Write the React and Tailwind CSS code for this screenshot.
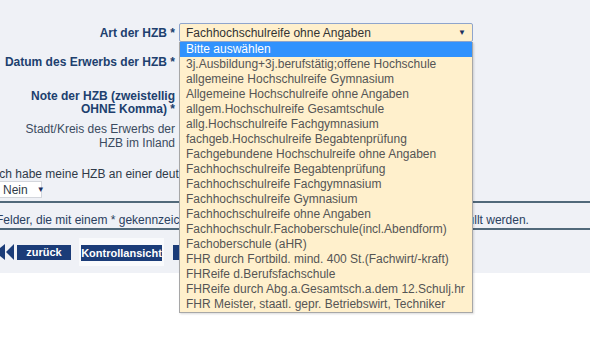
const options = [
  'Bitte auswählen',
  '3j.Ausbildung+3j.berufstätig;offene Hochschule',
  'allgemeine Hochschulreife Gymnasium',
  'Allgemeine Hochschulreife ohne Angaben',
  'allgem.Hochschulreife Gesamtschule',
  'allg.Hochschulreife Fachgymnasium',
  'fachgeb.Hochschulreife Begabtenprüfung',
  'Fachgebundene Hochschulreife ohne Angaben',
  'Fachhochschulreife Begabtenprüfung',
  'Fachhochschulreife Fachgymnasium',
  'Fachhochschulreife Gymnasium',
  'Fachhochschulreife ohne Angaben',
  'Fachhochschulr.Fachoberschule(incl.Abendform)',
  'Fachoberschule (aHR)',
  'FHR durch Fortbild. mind. 400 St.(Fachwirt/-kraft)',
  'FHReife d.Berufsfachschule',
  'FHReife durch Abg.a.Gesamtsch.a.dem 12.Schulj.hr',
  'FHR Meister, staatl. gepr. Betriebswirt, Techniker',
];

function Label({ children, bold = true }) {
  return (
    <div className={`w-[179px] shrink-0 text-right text-[12px] ${bold ? 'font-bold text-[#203f6e]' : 'text-[#3b4b60]'}`}>
      {children}
    </div>
  );
}

function Arrow() {
  return <span className="text-[8px] leading-none text-[#1b2f5e]">▼</span>;
}

export default function App() {
  return (
    <div className="relative w-[590px] h-[344px] overflow-hidden bg-white font-['Liberation_Sans',Arial,sans-serif]">
      <div className="h-[273px] bg-[#eff1f6] -ml-[4px] pt-[23px]">
        <div className="flex items-center gap-[4px] h-[19px]">
          <Label>Art der HZB *</Label>
          <div className="w-[294px] h-[19px] flex items-center justify-between pl-[6px] pr-[6px] bg-[#fff0cc] border border-[#8fa5cc] rounded-[2px] text-[12px] text-[#333]">
            <span>Fachhochschulreife ohne Angaben</span>
            <Arrow />
          </div>
        </div>
        <div className="flex items-center gap-[4px] h-[20px] mt-[10px]">
          <Label>Datum des Erwerbs der HZB *</Label>
        </div>
        <div className="flex gap-[4px] mt-[18px] leading-[13px]">
          <Label>Note der HZB (zweistellig<br />OHNE Komma) *</Label>
        </div>
        <div className="flex gap-[4px] mt-[6px] leading-[14px]">
          <Label bold={false}>Stadt/Kreis des Erwerbs der<br />HZB im Inland</Label>
        </div>
        <div className="mt-[17px] text-[12px] leading-[14px] text-[#2f3a48] whitespace-nowrap">
          Ich habe meine HZB an einer deutschen Schule erworben
        </div>
        <div className="w-[46px] h-[17px] flex items-center pl-[6px] gap-[9px] bg-white border border-[#d3d6dc] text-[12px] text-[#2f3a48]">
          <span>Nein</span>
          <Arrow />
        </div>
        <div className="mt-[3px] border-y-2 border-[#51697a] pt-[10px] pb-[1px] text-[12px] leading-[14px] text-[#2a4060] whitespace-nowrap">
          Felder, die mit einem * gekennzeichnet sind, sind Pflichtfelder und müssen immer ausgefüllt werden.
        </div>
        <div className="flex items-center mt-[8px]">
          <svg width="18" height="16" viewBox="0 0 18 16" className="shrink-0">
            <polygon points="4,4 9,0 9,16 4,12" fill="#1b3c78" />
            <polygon points="10,8 18,0 18,16" fill="#1b3c78" />
          </svg>
          <button className="ml-[3px] w-[54px] h-[15px] bg-[#1b3c78] text-white text-[11px] font-bold leading-[15px]">zurück</button>
          <div className="ml-[8px] p-[2px] bg-[#f9fafc]">
            <button className="w-[81px] h-[16px] bg-[#1b3c78] text-white text-[11px] font-bold leading-[16px]">Kontrollansicht</button>
          </div>
          <button className="ml-[9px] w-[80px] h-[15px] bg-[#1b3c78] text-white text-[11px] font-bold leading-[15px]">Weiter</button>
        </div>
      </div>

      <ul className="absolute left-[179px] top-[42px] w-[294px] bg-[#fff0cc] border border-t-0 border-[#a7a7a7] shadow-[1px_1px_2px_rgba(0,0,0,0.15)] text-[12px]">
        {options.map((o, i) => (
          <li key={o} className={`h-[15px] leading-[15px] pl-[6px] whitespace-nowrap overflow-hidden ${i === 0 ? 'bg-[#3192fd] text-white' : 'text-[#555]'}`}>
            {o}
          </li>
        ))}
      </ul>
    </div>
  );
}
